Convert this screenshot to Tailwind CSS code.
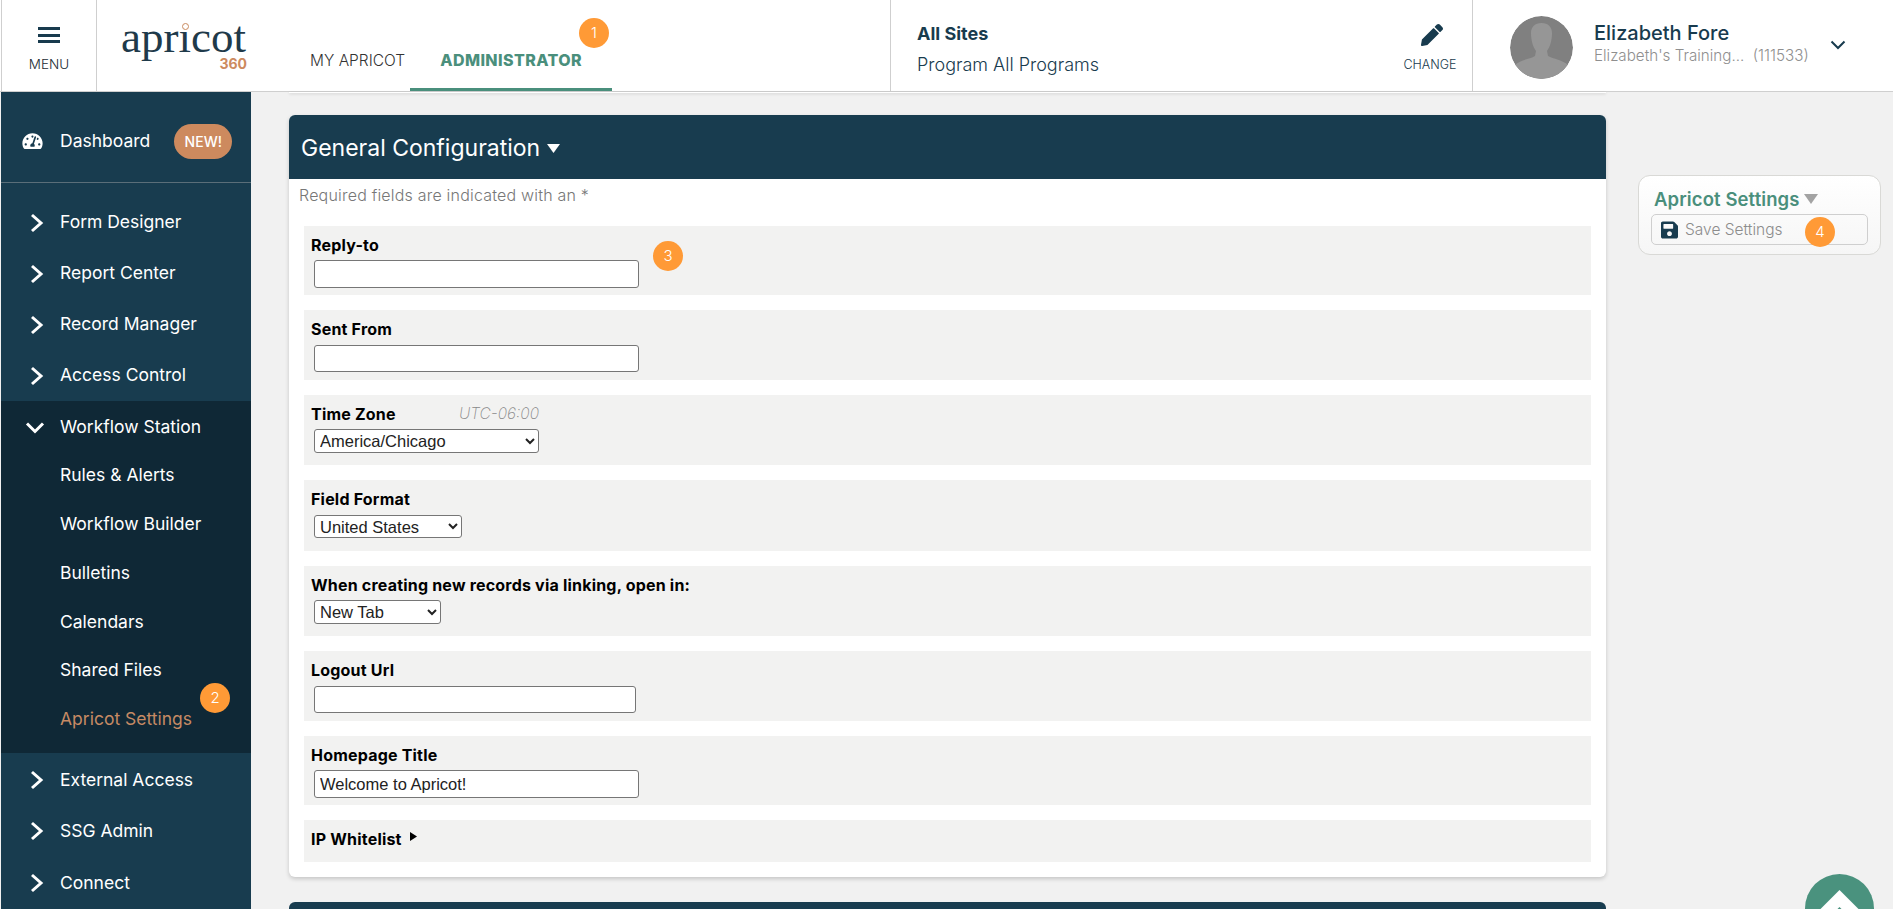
<!DOCTYPE html>
<html lang="en">
<head>
<meta charset="utf-8">
<title>Apricot Settings</title>
<script src="https://cdn.jsdelivr.net/npm/@tailwindcss/browser@4"></script>
</head>
<body class="relative h-[909px] w-[1893px] overflow-hidden bg-[#f1f1f1] font-['Inter','Liberation_Sans',sans-serif] text-[#183b4e]">

<header class="flex h-[92px] border-b border-[#cfcfcf] bg-white pl-px">
  <button class="flex w-[96px] flex-col items-center border-x border-[#cfcfcf] pt-[27px]">
    <span class="flex w-[22px] flex-col gap-[3.5px]">
      <span class="h-[3px] bg-[#183b4e]"></span><span class="h-[3px] bg-[#183b4e]"></span><span class="h-[3px] bg-[#183b4e]"></span>
    </span>
    <span class="mt-[13px] text-[13.500px] font-light leading-[16px] text-[#1b2b33]">MENU</span>
  </button>
  <div class="relative w-[124px] shrink-0 ml-[24px] pt-[18px] font-['Liberation_Serif',serif] text-[45px] leading-[38px] text-[#1f3a4a]">
    apr&#305;cot
    <span class="absolute left-[61px] top-[23px] h-[7px] w-[7px] rounded-full border-[1.5px] border-[#c98a5f]"></span>
    <span class="absolute right-[-2px] top-[57px] font-['Inter',sans-serif] text-[14px] font-bold leading-[14px] text-[#cd8a5e]">360</span>
  </div>
  <nav class="ml-[65px] flex">
    <a class="flex h-[91px] items-center pt-[31px] text-[15.500px] font-light text-[#333]">MY APRICOT</a>
    <a class="relative ml-[5px] flex h-[91px] w-[202px] items-center justify-center border-b-[3px] border-[#4a8f7c] pt-[31px] text-[16px] font-extrabold tracking-[0.4px] text-[#4a8f7c]">ADMINISTRATOR</a>
  </nav>
  <div class="ml-auto flex w-[582px] border-l border-[#cfcfcf]">
    <div class="pl-[26px] pt-[20px]">
      <div class="text-[18px] font-bold leading-[28px]">All Sites</div>
      <div class="mt-[3px] text-[18px] font-light leading-[28px]">Program All Programs</div>
    </div>
    <div class="ml-auto mr-[8px] flex w-[68px] flex-col items-center pt-[24px]">
      <svg class="ml-[4px] h-[22px] w-[24px] fill-[#183b4e]" viewBox="0 0 512 512"><path d="M497.9 142.1l-46.1 46.1c-4.7 4.7-12.3 4.7-17 0l-111-111c-4.7-4.7-4.7-12.3 0-17l46.1-46.1c18.7-18.7 49.1-18.7 67.9 0l60.1 60.1c18.8 18.7 18.8 49.1 0 67.9zM284.2 99.8L21.6 362.4.4 483.9c-2.9 16.4 11.4 30.6 27.8 27.8l121.5-21.3 262.6-262.6c4.7-4.7 4.7-12.3 0-17l-111-111c-4.8-4.7-12.4-4.7-17.1 0z"/></svg>
      <span class="mt-[11px] text-[12.500px] font-light leading-[16px]">CHANGE</span>
    </div>
  </div>
  <div class="flex w-[421px] items-start border-l border-[#cfcfcf] pl-[37px] pt-[16px]">
    <svg class="h-[63px] w-[63px] rounded-full" viewBox="0 0 63 63">
      <circle cx="31.5" cy="31.5" r="31.5" fill="#808080"/>
      <path d="M21 17c0-6 4-10 10.500-10S42 11 42 17c0 7-2 14-5 18l1 5c5 3 15 4 20 9-6 9-16 14-26.500 14S11 58 5 49c5-5 15-6 20-9l1-5c-3-4-5-11-5-18z" fill="#969696"/>
    </svg>
    <div class="ml-[21px] mt-[3px]">
      <div class="text-[20px] font-medium leading-[28px]">Elizabeth Fore</div>
      <div class="text-[15.200px] font-light leading-[18px] text-[#8f8f8f]">Elizabeth's Training...&nbsp;&nbsp;(111533)</div>
    </div>
    <svg class="ml-[21px] mt-[24px] h-[10px] w-[16px] fill-none stroke-[#183b4e] stroke-2" viewBox="0 0 16 10"><path d="M1.500 1.500 8 8l6.500-6.500"/></svg>
  </div>
</header>

<div class="flex h-[817px]">
  <aside class="ml-px w-[250px] shrink-0 overflow-hidden bg-[#183c4f] text-[17.500px] text-white">
    <div class="flex h-[91px] items-center border-b border-[#5a6e79] pl-[21px] pt-[8px]">
      <svg class="h-[18px] w-[21px] fill-white" viewBox="0 0 576 512"><path d="M288 32C128.940 32 0 160.940 0 320c0 52.800 14.250 102.260 39.060 144.800 5.610 9.620 16.300 15.200 27.440 15.200h443c11.140 0 21.830-5.580 27.440-15.200C561.750 422.260 576 372.800 576 320c0-159.060-128.940-288-288-288zm0 64c14.710 0 26.580 10.130 30.320 23.650-1.110 2.260-2.640 4.230-3.450 6.670l-9.220 27.670c-5.130 3.490-10.970 6.010-17.640 6.010-17.670 0-32-14.330-32-32S270.330 96 288 96zM96 384c-17.670 0-32-14.330-32-32s14.330-32 32-32 32 14.330 32 32-14.330 32-32 32zm48-160c-17.670 0-32-14.330-32-32s14.330-32 32-32 32 14.330 32 32-14.330 32-32 32zm246.770-72.410l-61.330 184C343.130 347.330 352 364.540 352 384c0 11.720-3.380 22.550-8.880 32H232.880c-5.500-9.450-8.880-20.280-8.880-32 0-33.940 26.500-61.430 59.900-63.590l61.340-184.010c4.170-12.560 17.730-19.450 30.360-15.170 12.570 4.190 19.350 17.770 15.170 30.360zm14.660 57.200l15.520-46.550c3.470-1.290 7.130-2.230 11.050-2.230 17.670 0 32 14.330 32 32s-14.330 32-32 32c-11.380-.01-20.890-6.280-26.570-15.220zM480 384c-17.670 0-32-14.330-32-32s14.330-32 32-32 32 14.330 32 32-14.330 32-32 32z"/></svg>
      <span class="ml-[17px]">Dashboard</span>
      <span class="ml-[24px] flex h-[35px] w-[58px] items-center justify-center rounded-full bg-[#cd8a5e] text-[14px] font-medium">NEW!</span>
    </div>
    <ul class="pt-[14px]">
      <li class="flex h-[51px] items-center pl-[29px]"><svg class="h-[20px] w-[14px] fill-none stroke-white stroke-[3]" viewBox="0 0 14 20"><path d="M2 2l9 8-9 8"/></svg><span class="ml-[16px]">Form Designer</span></li>
      <li class="flex h-[51px] items-center pl-[29px]"><svg class="h-[20px] w-[14px] fill-none stroke-white stroke-[3]" viewBox="0 0 14 20"><path d="M2 2l9 8-9 8"/></svg><span class="ml-[16px]">Report Center</span></li>
      <li class="flex h-[51px] items-center pl-[29px]"><svg class="h-[20px] w-[14px] fill-none stroke-white stroke-[3]" viewBox="0 0 14 20"><path d="M2 2l9 8-9 8"/></svg><span class="ml-[16px]">Record Manager</span></li>
      <li class="flex h-[51px] items-center pl-[29px]"><svg class="h-[20px] w-[14px] fill-none stroke-white stroke-[3]" viewBox="0 0 14 20"><path d="M2 2l9 8-9 8"/></svg><span class="ml-[16px]">Access Control</span></li>
    </ul>
    <div class="bg-[#0f2836] pb-[9px] pt-px">
      <div class="flex h-[51px] items-center pl-[24px]"><svg class="h-[14px] w-[20px] fill-none stroke-white stroke-[3]" viewBox="0 0 20 14"><path d="M2 2.500l8 8 8-8"/></svg><span class="ml-[15px]">Workflow Station</span></div>
      <ul class="-mt-[2px] pl-[59px]">
        <li class="flex h-[48.800px] items-center">Rules &amp; Alerts</li>
        <li class="flex h-[48.800px] items-center">Workflow Builder</li>
        <li class="flex h-[48.800px] items-center">Bulletins</li>
        <li class="flex h-[48.800px] items-center">Calendars</li>
        <li class="flex h-[48.800px] items-center">Shared Files</li>
        <li class="flex h-[48.800px] items-center text-[#c68a64]">Apricot Settings</li>
      </ul>
    </div>
    <ul class="pt-[1.500px]">
      <li class="flex h-[51.400px] items-center pl-[29px]"><svg class="h-[20px] w-[14px] fill-none stroke-white stroke-[3]" viewBox="0 0 14 20"><path d="M2 2l9 8-9 8"/></svg><span class="ml-[16px]">External Access</span></li>
      <li class="flex h-[51.400px] items-center pl-[29px]"><svg class="h-[20px] w-[14px] fill-none stroke-white stroke-[3]" viewBox="0 0 14 20"><path d="M2 2l9 8-9 8"/></svg><span class="ml-[16px]">SSG Admin</span></li>
      <li class="flex h-[51.400px] items-center pl-[29px]"><svg class="h-[20px] w-[14px] fill-none stroke-white stroke-[3]" viewBox="0 0 14 20"><path d="M2 2l9 8-9 8"/></svg><span class="ml-[16px]">Connect</span></li>
    </ul>
  </aside>

  <main class="ml-[38px] w-[1317px] shrink-0">
    <div class="h-px bg-white shadow-[0_1px_3px_rgba(0,0,0,0.2)]"></div>
    <section class="mt-[22px] rounded-[6px] bg-white shadow-[0_2px_4px_rgba(0,0,0,0.18)]">
      <h2 class="flex h-[64px] items-center rounded-t-[6px] bg-[#183c4f] pl-[12px] pt-[2px] text-[23px] font-normal leading-none text-white">General Configuration<svg class="ml-[7px] mt-[1px] h-[9px] w-[13px] fill-white" viewBox="0 0 13 9"><path d="M0 0h13L6.500 9z"/></svg></h2>
      <p class="h-[47px] pl-[10px] pt-[5px] text-[16px] font-light leading-[22px] tracking-[0.2px] text-[#777]">Required fields are indicated with an *</p>
      <div class="flex flex-col gap-[15px] px-[15px] pb-[15px]">
        <div class="h-[69px] bg-[#f2f2f1] px-[7px] pt-[7px]">
          <label class="block h-[27px] text-[16px] font-bold leading-[24px] tracking-[0.2px] text-black">Reply-to</label>
          <input type="text" class="ml-[3px] block h-[28px] w-[325px] rounded-[3px] border border-[#767676] bg-white px-[5px] font-['Liberation_Sans',sans-serif] text-[16.500px]">
        </div>
        <div class="h-[70px] bg-[#f2f2f1] px-[7px] pt-[7px]">
          <label class="block h-[28px] text-[16px] font-bold leading-[24px] tracking-[0.2px] text-black">Sent From</label>
          <input type="text" class="ml-[3px] block h-[27px] w-[325px] rounded-[3px] border border-[#767676] bg-white px-[5px] font-['Liberation_Sans',sans-serif] text-[16.500px]">
        </div>
        <div class="h-[70px] bg-[#f2f2f1] px-[7px] pt-[7px]">
          <div class="flex h-[27px]"><label class="w-[148px] text-[16px] font-bold leading-[24px] tracking-[0.2px] text-black">Time Zone</label><span class="text-[15.500px] font-extralight italic leading-[24px] text-[#888]">UTC-06:00</span></div>
          <select class="ml-[3px] block h-[24px] w-[225px] rounded-[3px] border border-[#767676] bg-white pl-[1px] font-['Liberation_Sans',sans-serif] text-[16.500px] text-[#222]"><option>America/Chicago</option></select>
        </div>
        <div class="h-[71px] bg-[#f2f2f1] px-[7px] pt-[7px]">
          <label class="block h-[28px] text-[16px] font-bold leading-[24px] tracking-[0.2px] text-black">Field Format</label>
          <select class="ml-[3px] block h-[23px] w-[148px] rounded-[3px] border border-[#767676] bg-white pl-[1px] font-['Liberation_Sans',sans-serif] text-[16.500px] text-[#222]"><option>United States</option></select>
        </div>
        <div class="h-[70px] bg-[#f2f2f1] px-[7px] pt-[7px]">
          <label class="block h-[27px] text-[16px] font-bold leading-[24px] tracking-[0.2px] text-black">When creating new records via linking, open in:</label>
          <select class="ml-[3px] block h-[24px] w-[127px] rounded-[3px] border border-[#767676] bg-white pl-[1px] font-['Liberation_Sans',sans-serif] text-[16.500px] text-[#222]"><option>New Tab</option></select>
        </div>
        <div class="h-[70px] bg-[#f2f2f1] px-[7px] pt-[7px]">
          <label class="block h-[28px] text-[16px] font-bold leading-[24px] tracking-[0.2px] text-black">Logout Url</label>
          <input type="text" class="ml-[3px] block h-[27px] w-[322px] rounded-[3px] border border-[#767676] bg-white px-[5px] font-['Liberation_Sans',sans-serif] text-[16.500px]">
        </div>
        <div class="h-[69px] bg-[#f2f2f1] px-[7px] pt-[7px]">
          <label class="block h-[27px] text-[16px] font-bold leading-[24px] tracking-[0.2px] text-black">Homepage Title</label>
          <input type="text" value="Welcome to Apricot!" class="ml-[3px] block h-[28px] w-[325px] rounded-[3px] border border-[#767676] bg-white px-[5px] font-['Liberation_Sans',sans-serif] text-[16.500px] text-[#222]">
        </div>
        <div class="flex h-[42px] items-start bg-[#f2f2f1] px-[7px] pt-[7px]">
          <label class="text-[16px] font-bold leading-[24px] tracking-[0.2px] text-black">IP Whitelist</label>
          <svg class="ml-[8px] mt-[5px] h-[9px] w-[7px] fill-black" viewBox="0 0 7 9"><path d="M0 0l7 4.500L0 9z"/></svg>
        </div>
      </div>
    </section>
    <div class="mt-[25px] h-[40px] rounded-t-[6px] bg-[#183c4f]"></div>
  </main>

  <aside class="ml-[32px] mt-[83px] h-[80px] w-[243px] shrink-0 rounded-[12px] border border-[#d9d9d6] bg-gradient-to-b from-white to-[#f6f6f6] px-[12px] pt-[10px]">
    <div class="flex items-center pl-[3px] text-[18.500px] font-semibold leading-[26px] tracking-[0.1px] text-[#4a8f7c]">Apricot Settings<svg class="ml-[4px] h-[10px] w-[14px] fill-[#a3a3a3]" viewBox="0 0 14 10"><path d="M0 0h14L7 10z"/></svg></div>
    <div class="mt-[2px] flex h-[31px] items-center rounded-[5px] border border-[#cfcfcf] pl-[9px] text-[15.500px] font-light text-[#8c8c8c]">
      <svg class="h-[18px] w-[17px] fill-[#183c4f]" viewBox="0 32 448 448"><path d="M433.941 129.941l-83.882-83.882A48 48 0 0 0 316.118 32H48C21.490 32 0 53.490 0 80v352c0 26.510 21.490 48 48 48h352c26.510 0 48-21.490 48-48V163.882a48 48 0 0 0-14.059-33.941zM224 416c-35.346 0-64-28.654-64-64 0-35.346 28.654-64 64-64s64 28.654 64 64c0 35.346-28.654 64-64 64zm96-304.520V212c0 6.627-5.373 12-12 12H76c-6.627 0-12-5.373-12-12V108c0-6.627 5.373-12 12-12h228.520c3.183 0 6.235 1.264 8.485 3.515l3.480 3.480A11.996 11.996 0 0 1 320 111.480z"/></svg>
      <span class="ml-[7px]">Save Settings</span>
    </div>
  </aside>
</div>

<span class="absolute left-[579px] top-[18px] flex h-[30px] w-[30px] items-center justify-center rounded-full bg-[#ff9a36] text-[15px] font-light text-white">1</span>
<span class="absolute left-[200px] top-[683px] flex h-[30px] w-[30px] items-center justify-center rounded-full bg-[#ff9a36] text-[15px] font-light text-white">2</span>
<span class="absolute left-[653px] top-[241px] flex h-[30px] w-[30px] items-center justify-center rounded-full bg-[#ff9a36] text-[15px] font-light text-white">3</span>
<span class="absolute left-[1805px] top-[217px] flex h-[30px] w-[30px] items-center justify-center rounded-full bg-[#ff9a36] text-[15px] font-light text-white">4</span>

<button class="absolute left-[1805px] top-[874px] h-[69px] w-[69px] rounded-full bg-[#4a927e]">
  <svg class="absolute left-0 top-0 h-[69px] w-[69px] fill-white" viewBox="0 0 69 69"><path d="M34.500 16 60 41.500v17L34.500 33 9 58.500v-17z"/></svg>
</button>
</body>
</html>
